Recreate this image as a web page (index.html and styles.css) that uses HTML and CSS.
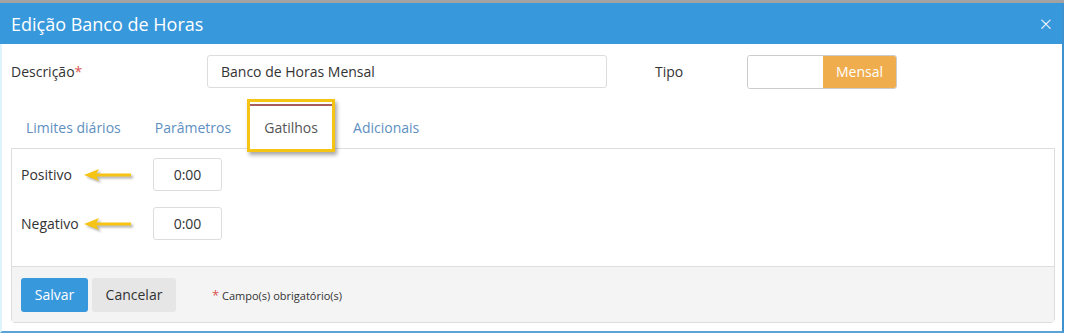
FILE: index.html
```html
<!DOCTYPE html>
<html lang="pt">
<head>
<meta charset="utf-8">
<link rel="stylesheet" href="styles.css">
</head>
<body>
<div class="topline"></div>
<div class="modal">
  <div class="modal-header">
    <span class="modal-title">Edição Banco de Horas</span>
    <span class="close">×</span>
  </div>
  <div class="modal-body">
    <div class="row">
      <label class="lbl-desc">Descrição<span class="req">*</span></label>
      <div class="input input-desc">Banco de Horas Mensal</div>
      <label class="lbl-tipo">Tipo</label>
      <div class="toggle">
        <span class="toggle-off"></span>
        <span class="toggle-on">Mensal</span>
      </div>
    </div>
    <div class="tabs">
      <span class="tab tab-first">Limites diários</span>
      <span class="tab">Parâmetros</span>
      <span class="tab-hl"><span class="tab active">Gatilhos</span></span>
      <span class="tab tab-last">Adicionais</span>
    </div>
    <div class="panel">
      <div class="panel-content">
        <div class="field">
          <span class="flabel">Positivo</span>
          <svg class="arrow" width="50" height="14" viewBox="0 0 50 14"><path d="M1 7 L16 1 L13.5 5.5 L48 5.5 L48 8.5 L13.5 8.5 L16 13 Z" fill="#f5c414"/></svg>
          <div class="input input-time">0:00</div>
        </div>
        <div class="field">
          <span class="flabel">Negativo</span>
          <svg class="arrow" width="50" height="14" viewBox="0 0 50 14"><path d="M1 7 L16 1 L13.5 5.5 L48 5.5 L48 8.5 L13.5 8.5 L16 13 Z" fill="#f5c414"/></svg>
          <div class="input input-time">0:00</div>
        </div>
      </div>
      <div class="panel-footer">
        <button class="btn btn-primary">Salvar</button>
        <button class="btn btn-default">Cancelar</button>
        <span class="note"><span class="req">*</span> Campo(s) obrigatório(s)</span>
      </div>
    </div>
  </div>
</div>
</body>
</html>
```
FILE: styles.css
```css
* { box-sizing: border-box; }
html, body { margin: 0; padding: 0; background: #fff; }
body {
  font-family: "Open Sans", "Liberation Sans", sans-serif;
  font-size: 14px;
  color: #333;
  width: 1066px;
  height: 335px;
  overflow: hidden;
}
.topline { height: 3px; background: #a3a3a3; width: 1064px; }
.modal {
  width: 1064px;
  height: 330px;
  border-left: 2px solid #dff3fb;
  border-right: 2px solid #3d92cf;
  border-bottom: 2px solid #5aa3d8;
}
.modal-header {
  height: 41px;
  background: #3898dc;
  margin-left: -2px;
  display: flex;
  align-items: center;
  justify-content: space-between;
  padding: 0 10px 0 11px;
}
.modal-title { color: #fff; font-size: 18px; }
.close { color: #fff; font-size: 22px; line-height: 1; font-weight: 300; margin-top: -1px; }
.modal-body { padding: 11px 8px 0 9px; }
.row { display: flex; align-items: center; height: 33px; }
.lbl-desc { width: 196px; }
.req { color: #d9534f; }
.input {
  border: 1px solid #ddd;
  border-radius: 3px;
  background: #fff;
  height: 33px;
  display: flex;
  align-items: center;
}
.input-desc { width: 400px; padding-left: 13px; }
.lbl-tipo { margin-left: 48px; width: 92px; }
.toggle {
  display: flex;
  width: 150px;
  height: 34px;
  border: 1px solid #ccc;
  border-radius: 3px;
  overflow: hidden;
}
.toggle-off { width: 75px; background: #fff; }
.toggle-on {
  flex: 1;
  background: #f0ad4e;
  color: #fff;
  display: flex;
  align-items: center;
  justify-content: center;
}
.tabs {
  display: flex;
  align-items: flex-end;
  height: 50px;
  margin-top: 10px;
  position: relative;
  z-index: 1;
}
.tab {
  color: #5e8fbf;
  padding: 0 17px;
  height: 42px;
  display: flex;
  align-items: center;
}
.tab-first { padding-left: 15px; }
.tab-last { margin-left: 1px; }
.tab-hl {
  border: 3px solid #f5c414;
  box-shadow: 2px 3px 4px rgba(0,0,0,0.35);
  padding: 2px 0 0 0;
  margin-left: -1px;
  width: 88px;
  height: 53px;
  margin-bottom: -4px;
  display: flex;
  background: #fff;
}
.tab.active {
  color: #555;
  border-top: 2px solid #a85d5d;
  padding: 0;
  height: 44px;
  width: 82px;
  justify-content: center;
}
.panel {
  width: 1044px;
  border: 1px solid #ddd;
  border-radius: 0 0 4px 4px;
}
.panel-content { height: 117px; padding: 9px 9px 0 9px; }
.field { display: flex; align-items: center; height: 33px; margin-bottom: 16px; }
.flabel { width: 62px; }
.arrow { filter: drop-shadow(2px 2px 1px rgba(0,0,0,0.3)); }
.input-time { margin-left: 20px; width: 69px; justify-content: center; height: 33px; }
.panel-footer {
  height: 56px;
  background: #f4f4f4;
  border-top: 1px solid #ddd;
  display: flex;
  align-items: center;
  padding-left: 9px;
}
.btn {
  font-family: inherit;
  font-size: 14px;
  border: none;
  border-radius: 3px;
  height: 34px;
  padding: 0 14px;
}
.btn-primary { background: #3898dc; color: #fff; width: 67px; padding: 0; }
.btn-default { background: #e6e6e6; color: #333; margin-left: 4px; width: 84px; padding: 0; }
.note { font-size: 11px; margin-left: 36px; color: #333; }
.note .req { font-size: 13px; }
```
